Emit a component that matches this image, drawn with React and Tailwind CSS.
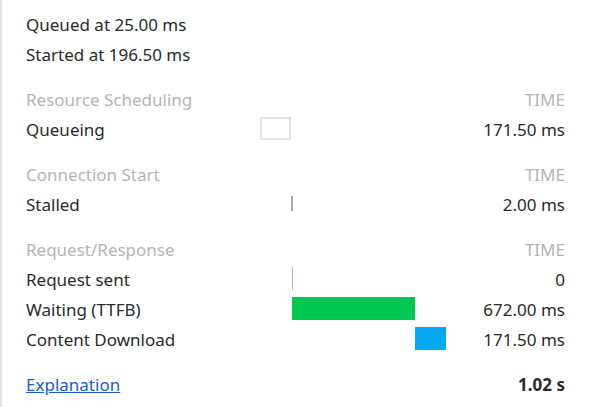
import React from 'react';

const font = { fontFamily: '"Noto Sans", "Open Sans", sans-serif' };

const sections = [
  {
    title: 'Resource Scheduling',
    rows: [{ label: 'Queueing', value: '171.50 ms', bar: { left: 0, width: 31, kind: 'queue' } }],
  },
  {
    title: 'Connection Start',
    rows: [{ label: 'Stalled', value: '2.00 ms', bar: { left: 31, width: 2, kind: 'stall' } }],
  },
  {
    title: 'Request/Response',
    rows: [
      { label: 'Request sent', value: '0', bar: { left: 32, width: 1, kind: 'sent' } },
      { label: 'Waiting (TTFB)', value: '672.00 ms', bar: { left: 32, width: 123, kind: 'wait' } },
      { label: 'Content Download', value: '171.50 ms', bar: { left: 155, width: 31, kind: 'download' } },
    ],
  },
];

const barClass = {
  queue: 'h-[23px] border-2 border-[#e3e3e3] bg-white',
  stall: 'h-[15px] bg-[#a9a9a9]',
  sent: 'h-[23px] bg-[#a6bccb]',
  wait: 'h-[23px] bg-[#00c853]',
  download: 'h-[23px] bg-[#03a9f4]',
};

function Bar({ bar }) {
  return (
    <div className="relative h-[30px] w-[186px] flex items-center">
      <div
        className={'absolute ' + barClass[bar.kind]}
        style={{ left: bar.left, width: bar.width }}
      />
    </div>
  );
}

export default function App() {
  return (
    <div className="w-[590px] h-[407px] bg-white border-l-2 border-[#e2e2e2] text-[17px] leading-none text-[#2a2a2a] overflow-hidden" style={font}>
      <div className="pl-[24px] pr-[25px] pt-[8px]">
        <div className="h-[30px] flex items-center pt-[2px]">Queued at 25.00 ms</div>
        <div className="h-[30px] flex items-center pt-[2px]">Started at 196.50 ms</div>

        {sections.map(sec => (
          <div key={sec.title} className="mt-[15px]">
            <div className="h-[30px] flex items-center justify-between pt-[2px] text-[#b4b4b4]">
              <span>{sec.title}</span>
              <span>TIME</span>
            </div>
            {sec.rows.map(r => (
              <div key={r.label} className="h-[30px] grid grid-cols-[234px_186px_1fr] items-center">
                <span className="pt-[2px]">{r.label}</span>
                <Bar bar={r.bar} />
                <span className="pt-[2px] text-right">{r.value}</span>
              </div>
            ))}
          </div>
        ))}

        <div className="mt-[15px] h-[30px] flex items-center justify-between pt-[2px]">
          <a href="#" className="text-[#1a5ccc] underline">Explanation</a>
          <span className="font-bold">1.02 s</span>
        </div>
      </div>
    </div>
  );
}
